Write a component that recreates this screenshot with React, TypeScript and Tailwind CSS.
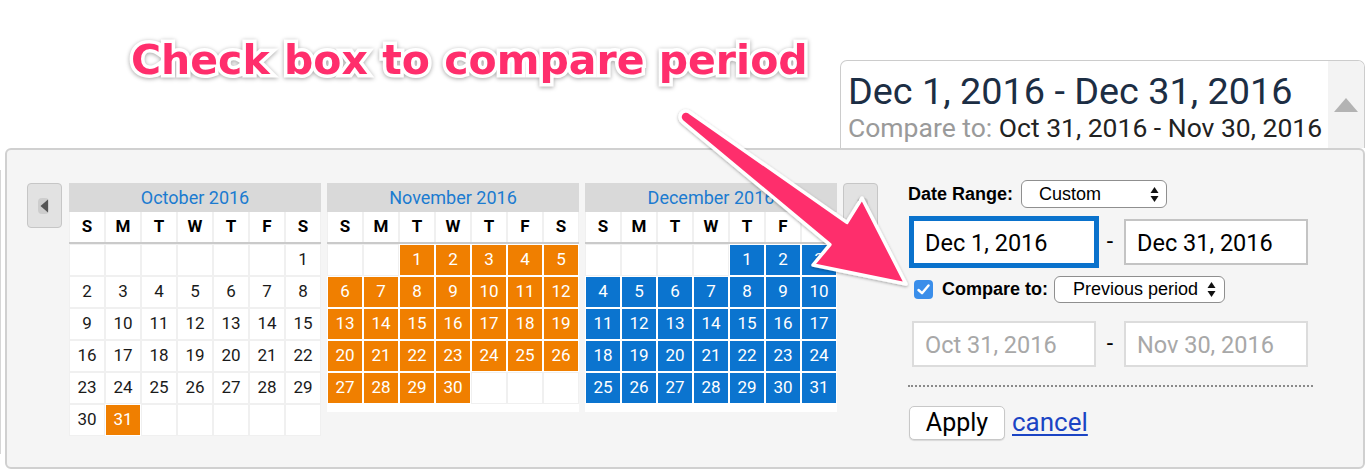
import React from "react";

const NAMES = ["S", "M", "T", "W", "T", "F", "S"];

type MonthProps = {
  title: string;
  start: number;
  days: number;
  selFrom: number;
  selTo: number;
  color: string;
  rows: number;
  extra?: boolean;
};

function Month({ title, start, days, selFrom, selTo, color, rows, extra }: MonthProps) {
  const cells: (number | null)[] = [];
  for (let i = 0; i < rows * 7; i++) {
    const d = i - start + 1;
    cells.push(d >= 1 && d <= days ? d : null);
  }
  return (
    <div className="w-[252px] shrink-0">
      <div className="h-[29px] bg-[#d9d9d9] flex items-center justify-center text-[18px] text-[#1b7bd0]">
        {title}
      </div>
      <div className="grid grid-cols-7 border-b-2 border-[#cacaca]">
        {NAMES.map((n, i) => (
          <div
            key={i}
            className="h-[30px] bg-white border-x border-[#f0f0f0] flex items-center justify-center font-bold text-[17px] text-black"
          >
            {n}
          </div>
        ))}
      </div>
      <div className="grid grid-cols-7">
        {cells.map((d, i) => {
          const sel = d !== null && d >= selFrom && d <= selTo;
          return (
            <div
              key={i}
              className={`h-[32px] border flex items-center justify-center text-[17px] ${
                sel ? `${color} border-white text-white` : "bg-white border-[#f0f0f0] text-[#1a1a1a]"
              }`}
            >
              {d ?? ""}
            </div>
          );
        })}
      </div>
      {extra && <div className="h-[8px] bg-white" />}
    </div>
  );
}

function NavButton({ dir }: { dir: "left" | "right" }) {
  return (
    <div className="w-[35px] h-[45px] shrink-0 bg-[#e2e2e2] border border-[#c6c6c6] rounded-[4px] flex items-center justify-center">
      <svg width="14" height="18" viewBox="0 0 14 18">
        {dir === "left" ? (
          <>
            <rect x="0" y="1" width="11" height="16" rx="4" fill="#cdcdcd" />
            <path d="M10 2.5 L2.5 9 L10 15.5 Z" fill="#555" />
          </>
        ) : (
          <>
            <rect x="3" y="1" width="11" height="16" rx="4" fill="#cdcdcd" />
            <path d="M4 2.5 L11.5 9 L4 15.5 Z" fill="#555" />
          </>
        )}
      </svg>
    </div>
  );
}

function UpDown() {
  return (
    <svg width="9" height="17" viewBox="0 0 9 17">
      <path d="M4.5 1 L8.5 7 L0.5 7 Z" fill="#111" />
      <path d="M4.5 16 L8.5 10 L0.5 10 Z" fill="#111" />
    </svg>
  );
}

export default function App() {
  return (
    <div className="relative w-[1370px] h-[470px] bg-white overflow-hidden font-['Roboto',sans-serif]">
      <div className="absolute left-0 top-[170px] h-[284px] w-px bg-[#d6d6d6]" />

      {/* top row */}
      <div className="flex h-[148px]">
        <div className="pl-[131px] pt-[40px]">
          <div className="font-['DejaVu_Sans',sans-serif] font-bold text-[41px] leading-[41px] text-[#ff2e6c] [-webkit-text-stroke:7px_white] [paint-order:stroke_fill] drop-shadow-[0_1px_2px_rgba(0,0,0,0.35)] whitespace-nowrap">
            Check box to compare period
          </div>
        </div>
        <div className="ml-auto mr-[5px] mt-[60px] w-[525px] h-[88px] border border-b-0 border-[#cccccc] rounded-t-[7px] bg-white flex overflow-hidden">
          <div className="flex-1 pl-[7px] pt-[10px] whitespace-nowrap">
            <div className="text-[37.8px] leading-[40px] text-[#1c2e44]">Dec 1, 2016 - Dec 31, 2016</div>
            <div className="text-[26.5px] leading-[30px] mt-[2px] text-[#222]">
              <span className="text-[#9a9a9a]">Compare to: </span>Oct 31, 2016 - Nov 30, 2016
            </div>
          </div>
          <div className="w-[36px] bg-[#f3f3f3] flex justify-center pt-[37px]">
            <svg width="24" height="14" viewBox="0 0 24 14">
              <path d="M12 0 L24 14 L0 14 Z" fill="#b3b3b3" />
            </svg>
          </div>
        </div>
      </div>

      {/* panel */}
      <div className="mx-[5px] h-[321px] border-2 border-[#d0d0d0] rounded-[6px] bg-[#f5f5f5] flex items-start pt-[33px] pl-[20px]">
        <NavButton dir="left" />
        <div className="flex gap-[6px] ml-[7px]">
          <Month title="October 2016" start={6} days={31} selFrom={31} selTo={31} color="bg-[#f07f00]" rows={6} />
          <Month title="November 2016" start={2} days={30} selFrom={1} selTo={30} color="bg-[#f07f00]" rows={5} extra />
          <Month title="December 2016" start={4} days={31} selFrom={1} selTo={31} color="bg-[#0b74cf]" rows={5} extra />
        </div>
        <div className="ml-[6px]">
          <NavButton dir="right" />
        </div>

        {/* right controls */}
        <div className="ml-[30px] -mt-[3px] w-[406px]">
          <div className="flex items-center h-[28px] font-['Liberation_Sans',Arial,sans-serif]">
            <span className="font-bold text-[18px] text-black w-[113px]">Date Range:</span>
            <div className="h-[28px] w-[146px] border border-[#8f8f8f] rounded-[6px] bg-white flex items-center pl-[17px] pr-[7px] text-[18px] text-black">
              <span className="flex-1">Custom</span>
              <UpDown />
            </div>
          </div>

          <div className="flex items-center mt-[11px] ml-[4px]">
            <div className="w-[184px] h-[46px] bg-white border-2 border-[#0a72cc] outline-[3px] outline-solid outline-[#0a72cc] flex items-center pl-[11px] pt-[3px] text-[23.5px] text-black">
              Dec 1, 2016
            </div>
            <div className="w-[28px] text-center text-[23px] text-black">-</div>
            <div className="w-[184px] h-[46px] bg-white border-2 border-[#c4c4c4] flex items-center pl-[11px] pt-[3px] text-[23.5px] text-black">
              Dec 31, 2016
            </div>
          </div>

          <div className="flex items-center mt-[11px] h-[27px] font-['Liberation_Sans',Arial,sans-serif]">
            <div className="ml-[6px] w-[19px] h-[19px] rounded-[4px] bg-[#3a8eea] flex items-center justify-center">
              <svg width="13" height="11" viewBox="0 0 13 11">
                <path d="M1.5 6 L5 9.2 L11.5 1.5" fill="none" stroke="white" strokeWidth="2.4" strokeLinecap="round" strokeLinejoin="round" />
              </svg>
            </div>
            <span className="ml-[9px] font-bold text-[18px] text-black w-[112px]">Compare to:</span>
            <div className="h-[27px] w-[171px] border border-[#8f8f8f] rounded-[6px] bg-white flex items-center pl-[18px] pr-[8px] text-[18px] text-black">
              <span className="flex-1">Previous period</span>
              <UpDown />
            </div>
          </div>

          <div className="flex items-center mt-[18px] ml-[4px]">
            <div className="w-[184px] h-[46px] bg-white border-2 border-[#dcdcdc] flex items-center pl-[11px] pt-[3px] text-[23.5px] text-[#a8a8a8]">
              Oct 31, 2016
            </div>
            <div className="w-[28px] text-center text-[23px] text-black">-</div>
            <div className="w-[184px] h-[46px] bg-white border-2 border-[#dcdcdc] flex items-center pl-[11px] pt-[3px] text-[23.5px] text-[#a8a8a8]">
              Nov 30, 2016
            </div>
          </div>

          <div className="mt-[18px] w-[405px] border-t-2 border-dotted border-[#8a8a8a]" />

          <div className="flex items-center mt-[16px] ml-[1px]">
            <div className="w-[96px] h-[34px] bg-white border border-[#c8c8c8] rounded-[5px] shadow-[0_1px_1px_rgba(0,0,0,0.12)] flex items-center justify-center text-[25px] text-black">
              Apply
            </div>
            <span className="ml-[7px] text-[26px] text-[#1b44c4] underline underline-offset-[3px]">cancel</span>
          </div>
        </div>
      </div>

      {/* arrow overlay */}
      <svg className="absolute left-0 top-0 pointer-events-none" width="1370" height="470" viewBox="0 0 1370 470">
        <defs>
          <filter id="sh" x="-20%" y="-20%" width="140%" height="140%">
            <feDropShadow dx="0" dy="1" stdDeviation="1.5" floodColor="#000" floodOpacity="0.35" />
          </filter>
        </defs>
        <path
          d="M689.6 112.2 L846.9 222.4 L862 198 L906 284 L813 265 L829.9 244.6 L682.4 121.8 A6 6 0 0 1 689.6 112.2 Z"
          fill="#fe2f6c"
          stroke="white"
          strokeWidth="3.5"
          strokeLinejoin="round"
          filter="url(#sh)"
        />
      </svg>
    </div>
  );
}
